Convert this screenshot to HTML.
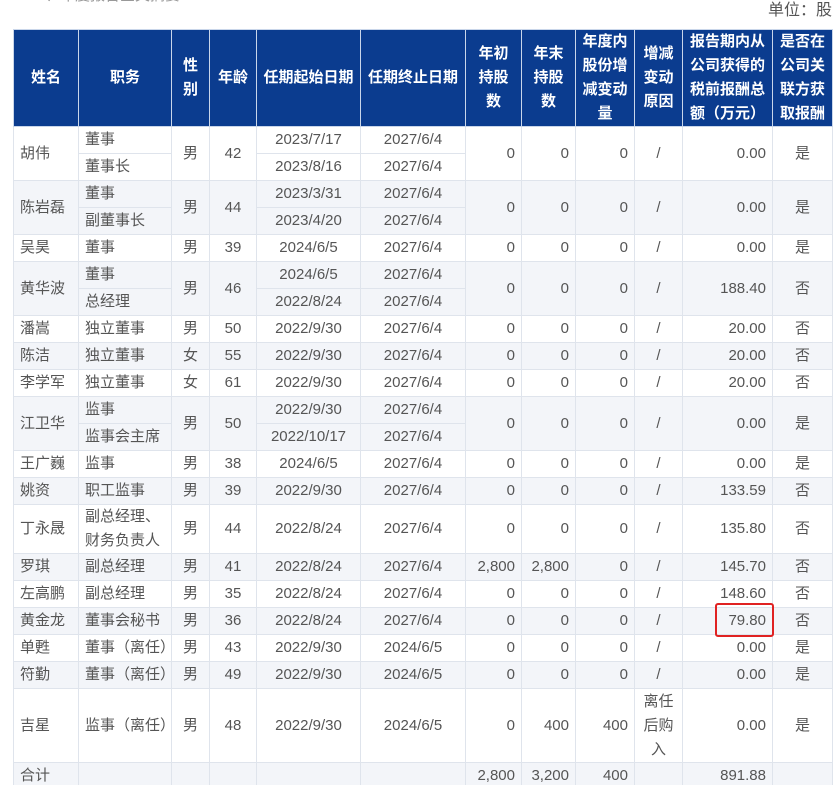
<!DOCTYPE html>
<html><head><meta charset="utf-8">
<style>
html,body{margin:0;padding:0;background:#fff;width:839px;height:785px;overflow:hidden;position:relative}
body{font-family:"Liberation Sans","Noto Sans CJK SC",sans-serif;color:#555;font-size:15px}
.unit{position:absolute;right:7px;top:1px;font-size:16px;color:#555;line-height:20px}
.top{position:absolute;left:45px;top:-14px;font-size:15px;color:#999;line-height:20px}
table{position:absolute;left:13px;top:29px;border-collapse:collapse;table-layout:fixed;width:819px}
th{background:#0b3c8f;color:#fff;font-weight:bold;font-size:15px;line-height:24px;border:1px solid #c9d6ea;padding:0 2px;text-align:center;height:94px}
td{border:1px solid #dfe4ec;height:26px;padding:0 6px;line-height:22px;text-align:center;white-space:nowrap}
td.l{text-align:left}
td.r{text-align:right}
tr.s td{background:#f3f5f9}
.red{position:absolute;left:715px;top:603px;width:55px;height:30px;border:2px solid #e02222;border-radius:3px}
</style></head><body>
<div class="top">、年度报告全文摘要</div>
<div class="unit">单位：股</div>
<table>
<colgroup><col style="width:65px"><col style="width:93px"><col style="width:38px"><col style="width:47px"><col style="width:104px"><col style="width:105px"><col style="width:56px"><col style="width:54px"><col style="width:59px"><col style="width:48px"><col style="width:90px"><col style="width:60px"></colgroup>
<tr><th>姓名</th><th>职务</th><th>性<br>别</th><th>年龄</th><th>任期起始日期</th><th>任期终止日期</th><th>年初<br>持股<br>数</th><th>年末<br>持股<br>数</th><th>年度内<br>股份增<br>减变动<br>量</th><th>增减<br>变动<br>原因</th><th>报告期内从<br>公司获得的<br>税前报酬总<br>额（万元）</th><th>是否在<br>公司关<br>联方获<br>取报酬</th></tr>
<tr><td class="l" rowspan="2">胡伟</td><td class="l">董事</td><td rowspan="2">男</td><td rowspan="2">42</td><td>2023/7/17</td><td>2027/6/4</td><td class="r" rowspan="2">0</td><td class="r" rowspan="2">0</td><td class="r" rowspan="2">0</td><td rowspan="2">/</td><td class="r" rowspan="2">0.00</td><td rowspan="2">是</td></tr>
<tr><td class="l">董事长</td><td>2023/8/16</td><td>2027/6/4</td></tr>
<tr class="s"><td class="l" rowspan="2">陈岩磊</td><td class="l">董事</td><td rowspan="2">男</td><td rowspan="2">44</td><td>2023/3/31</td><td>2027/6/4</td><td class="r" rowspan="2">0</td><td class="r" rowspan="2">0</td><td class="r" rowspan="2">0</td><td rowspan="2">/</td><td class="r" rowspan="2">0.00</td><td rowspan="2">是</td></tr>
<tr class="s"><td class="l">副董事长</td><td>2023/4/20</td><td>2027/6/4</td></tr>
<tr><td class="l">吴昊</td><td class="l">董事</td><td>男</td><td>39</td><td>2024/6/5</td><td>2027/6/4</td><td class="r">0</td><td class="r">0</td><td class="r">0</td><td>/</td><td class="r">0.00</td><td>是</td></tr>
<tr class="s"><td class="l" rowspan="2">黄华波</td><td class="l">董事</td><td rowspan="2">男</td><td rowspan="2">46</td><td>2024/6/5</td><td>2027/6/4</td><td class="r" rowspan="2">0</td><td class="r" rowspan="2">0</td><td class="r" rowspan="2">0</td><td rowspan="2">/</td><td class="r" rowspan="2">188.40</td><td rowspan="2">否</td></tr>
<tr class="s"><td class="l">总经理</td><td>2022/8/24</td><td>2027/6/4</td></tr>
<tr><td class="l">潘嵩</td><td class="l">独立董事</td><td>男</td><td>50</td><td>2022/9/30</td><td>2027/6/4</td><td class="r">0</td><td class="r">0</td><td class="r">0</td><td>/</td><td class="r">20.00</td><td>否</td></tr>
<tr class="s"><td class="l">陈洁</td><td class="l">独立董事</td><td>女</td><td>55</td><td>2022/9/30</td><td>2027/6/4</td><td class="r">0</td><td class="r">0</td><td class="r">0</td><td>/</td><td class="r">20.00</td><td>否</td></tr>
<tr><td class="l">李学军</td><td class="l">独立董事</td><td>女</td><td>61</td><td>2022/9/30</td><td>2027/6/4</td><td class="r">0</td><td class="r">0</td><td class="r">0</td><td>/</td><td class="r">20.00</td><td>否</td></tr>
<tr class="s"><td class="l" rowspan="2">江卫华</td><td class="l">监事</td><td rowspan="2">男</td><td rowspan="2">50</td><td>2022/9/30</td><td>2027/6/4</td><td class="r" rowspan="2">0</td><td class="r" rowspan="2">0</td><td class="r" rowspan="2">0</td><td rowspan="2">/</td><td class="r" rowspan="2">0.00</td><td rowspan="2">是</td></tr>
<tr class="s"><td class="l">监事会主席</td><td>2022/10/17</td><td>2027/6/4</td></tr>
<tr><td class="l">王广巍</td><td class="l">监事</td><td>男</td><td>38</td><td>2024/6/5</td><td>2027/6/4</td><td class="r">0</td><td class="r">0</td><td class="r">0</td><td>/</td><td class="r">0.00</td><td>是</td></tr>
<tr class="s"><td class="l">姚资</td><td class="l">职工监事</td><td>男</td><td>39</td><td>2022/9/30</td><td>2027/6/4</td><td class="r">0</td><td class="r">0</td><td class="r">0</td><td>/</td><td class="r">133.59</td><td>否</td></tr>
<tr><td class="l" style="height:46px">丁永晟</td><td class="l" style="line-height:24px">副总经理、<br>财务负责人</td><td>男</td><td>44</td><td>2022/8/24</td><td>2027/6/4</td><td class="r">0</td><td class="r">0</td><td class="r">0</td><td>/</td><td class="r">135.80</td><td>否</td></tr>
<tr class="s"><td class="l">罗琪</td><td class="l">副总经理</td><td>男</td><td>41</td><td>2022/8/24</td><td>2027/6/4</td><td class="r">2,800</td><td class="r">2,800</td><td class="r">0</td><td>/</td><td class="r">145.70</td><td>否</td></tr>
<tr><td class="l">左高鹏</td><td class="l">副总经理</td><td>男</td><td>35</td><td>2022/8/24</td><td>2027/6/4</td><td class="r">0</td><td class="r">0</td><td class="r">0</td><td>/</td><td class="r">148.60</td><td>否</td></tr>
<tr class="s"><td class="l">黄金龙</td><td class="l">董事会秘书</td><td>男</td><td>36</td><td>2022/8/24</td><td>2027/6/4</td><td class="r">0</td><td class="r">0</td><td class="r">0</td><td>/</td><td class="r">79.80</td><td>否</td></tr>
<tr><td class="l">单甦</td><td class="l">董事（离任）</td><td>男</td><td>43</td><td>2022/9/30</td><td>2024/6/5</td><td class="r">0</td><td class="r">0</td><td class="r">0</td><td>/</td><td class="r">0.00</td><td>是</td></tr>
<tr class="s"><td class="l">符勤</td><td class="l">董事（离任）</td><td>男</td><td>49</td><td>2022/9/30</td><td>2024/6/5</td><td class="r">0</td><td class="r">0</td><td class="r">0</td><td>/</td><td class="r">0.00</td><td>是</td></tr>
<tr><td class="l" style="height:73px">吉星</td><td class="l">监事（离任）</td><td>男</td><td>48</td><td>2022/9/30</td><td>2024/6/5</td><td class="r">0</td><td class="r">400</td><td class="r">400</td><td style="line-height:24px;padding:0">离任<br>后购<br>入</td><td class="r">0.00</td><td>是</td></tr>
<tr class="s"><td class="l">合计</td><td></td><td></td><td></td><td></td><td></td><td class="r">2,800</td><td class="r">3,200</td><td class="r">400</td><td></td><td class="r">891.88</td><td></td></tr>
</table>
<div class="red"></div>
</body></html>
